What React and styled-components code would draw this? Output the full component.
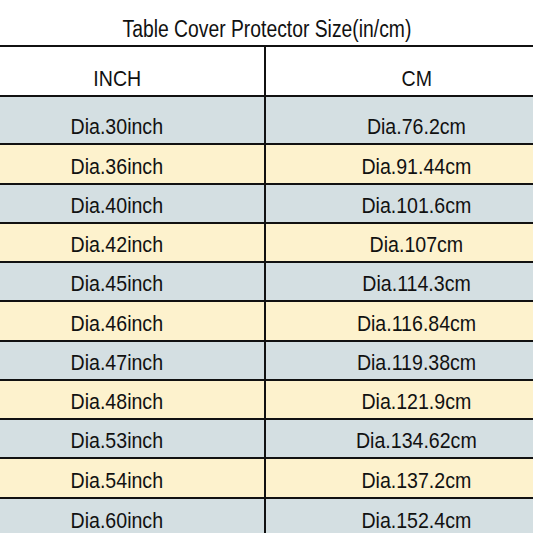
import React from 'react';
import styled, { createGlobalStyle } from 'styled-components';

const GlobalStyle = createGlobalStyle`
  html, body {
    margin: 0;
    padding: 0;
    background: #ffffff;
  }
  body {
    font-family: "Liberation Sans", Arial, sans-serif;
    color: #111;
  }
`;

const Page = styled.div`
  width: 533px;
  height: 533px;
  overflow: hidden;
  background: #ffffff;
`;

const Title = styled.div`
  height: 45px;
  display: flex;
  align-items: flex-end;
  justify-content: center;
  padding-bottom: 4px;
  box-sizing: border-box;
  font-size: 23px;
  line-height: 23px;
`;

const Squeeze = styled.span`
  display: inline-block;
  white-space: nowrap;
  transform: scaleX(${p => p.$sx || 0.91});
`;

const Row = styled.div`
  display: flex;
  height: ${p => p.$h}px;
  box-sizing: border-box;
  border-top: 2px solid #111;
  background: ${p => p.$bg};
`;

const Cell = styled.div`
  display: flex;
  align-items: flex-end;
  justify-content: center;
  box-sizing: border-box;
  padding-bottom: ${p => p.$pb}px;
  font-size: 21.5px;
  line-height: 21px;
`;

const LeftCell = styled(Cell)`
  width: 266px;
  flex: none;
  border-right: 2px solid #111;
  padding-right: 30px;
`;

const RightCell = styled(Cell)`
  flex: 1;
  padding-left: 34px;
`;

const BLUE = '#d4dfe2';
const YELLOW = '#fdf2cd';

const sizes = [
  ['Dia.30inch', 'Dia.76.2cm', 48],
  ['Dia.36inch', 'Dia.91.44cm', 40],
  ['Dia.40inch', 'Dia.101.6cm', 39],
  ['Dia.42inch', 'Dia.107cm', 39],
  ['Dia.45inch', 'Dia.114.3cm', 39],
  ['Dia.46inch', 'Dia.116.84cm', 40],
  ['Dia.47inch', 'Dia.119.38cm', 39],
  ['Dia.48inch', 'Dia.121.9cm', 39],
  ['Dia.53inch', 'Dia.134.62cm', 39],
  ['Dia.54inch', 'Dia.137.2cm', 40],
  ['Dia.60inch', 'Dia.152.4cm', 40],
];

const App = () => (
  <Page>
    <GlobalStyle />
    <Title>
      <Squeeze $sx={0.84}>Table Cover Protector Size(in/cm)</Squeeze>
    </Title>
    <Row $h={50} $bg="#ffffff">
      <LeftCell $pb={5}><Squeeze>INCH</Squeeze></LeftCell>
      <RightCell $pb={5}><Squeeze>CM</Squeeze></RightCell>
    </Row>
    {sizes.map(([inch, cm, h], i) => (
      <Row key={inch} $h={h} $bg={i % 2 === 0 ? BLUE : YELLOW}>
        <LeftCell $pb={5}><Squeeze>{inch}</Squeeze></LeftCell>
        <RightCell $pb={5}><Squeeze>{cm}</Squeeze></RightCell>
      </Row>
    ))}
  </Page>
);

export default App;
